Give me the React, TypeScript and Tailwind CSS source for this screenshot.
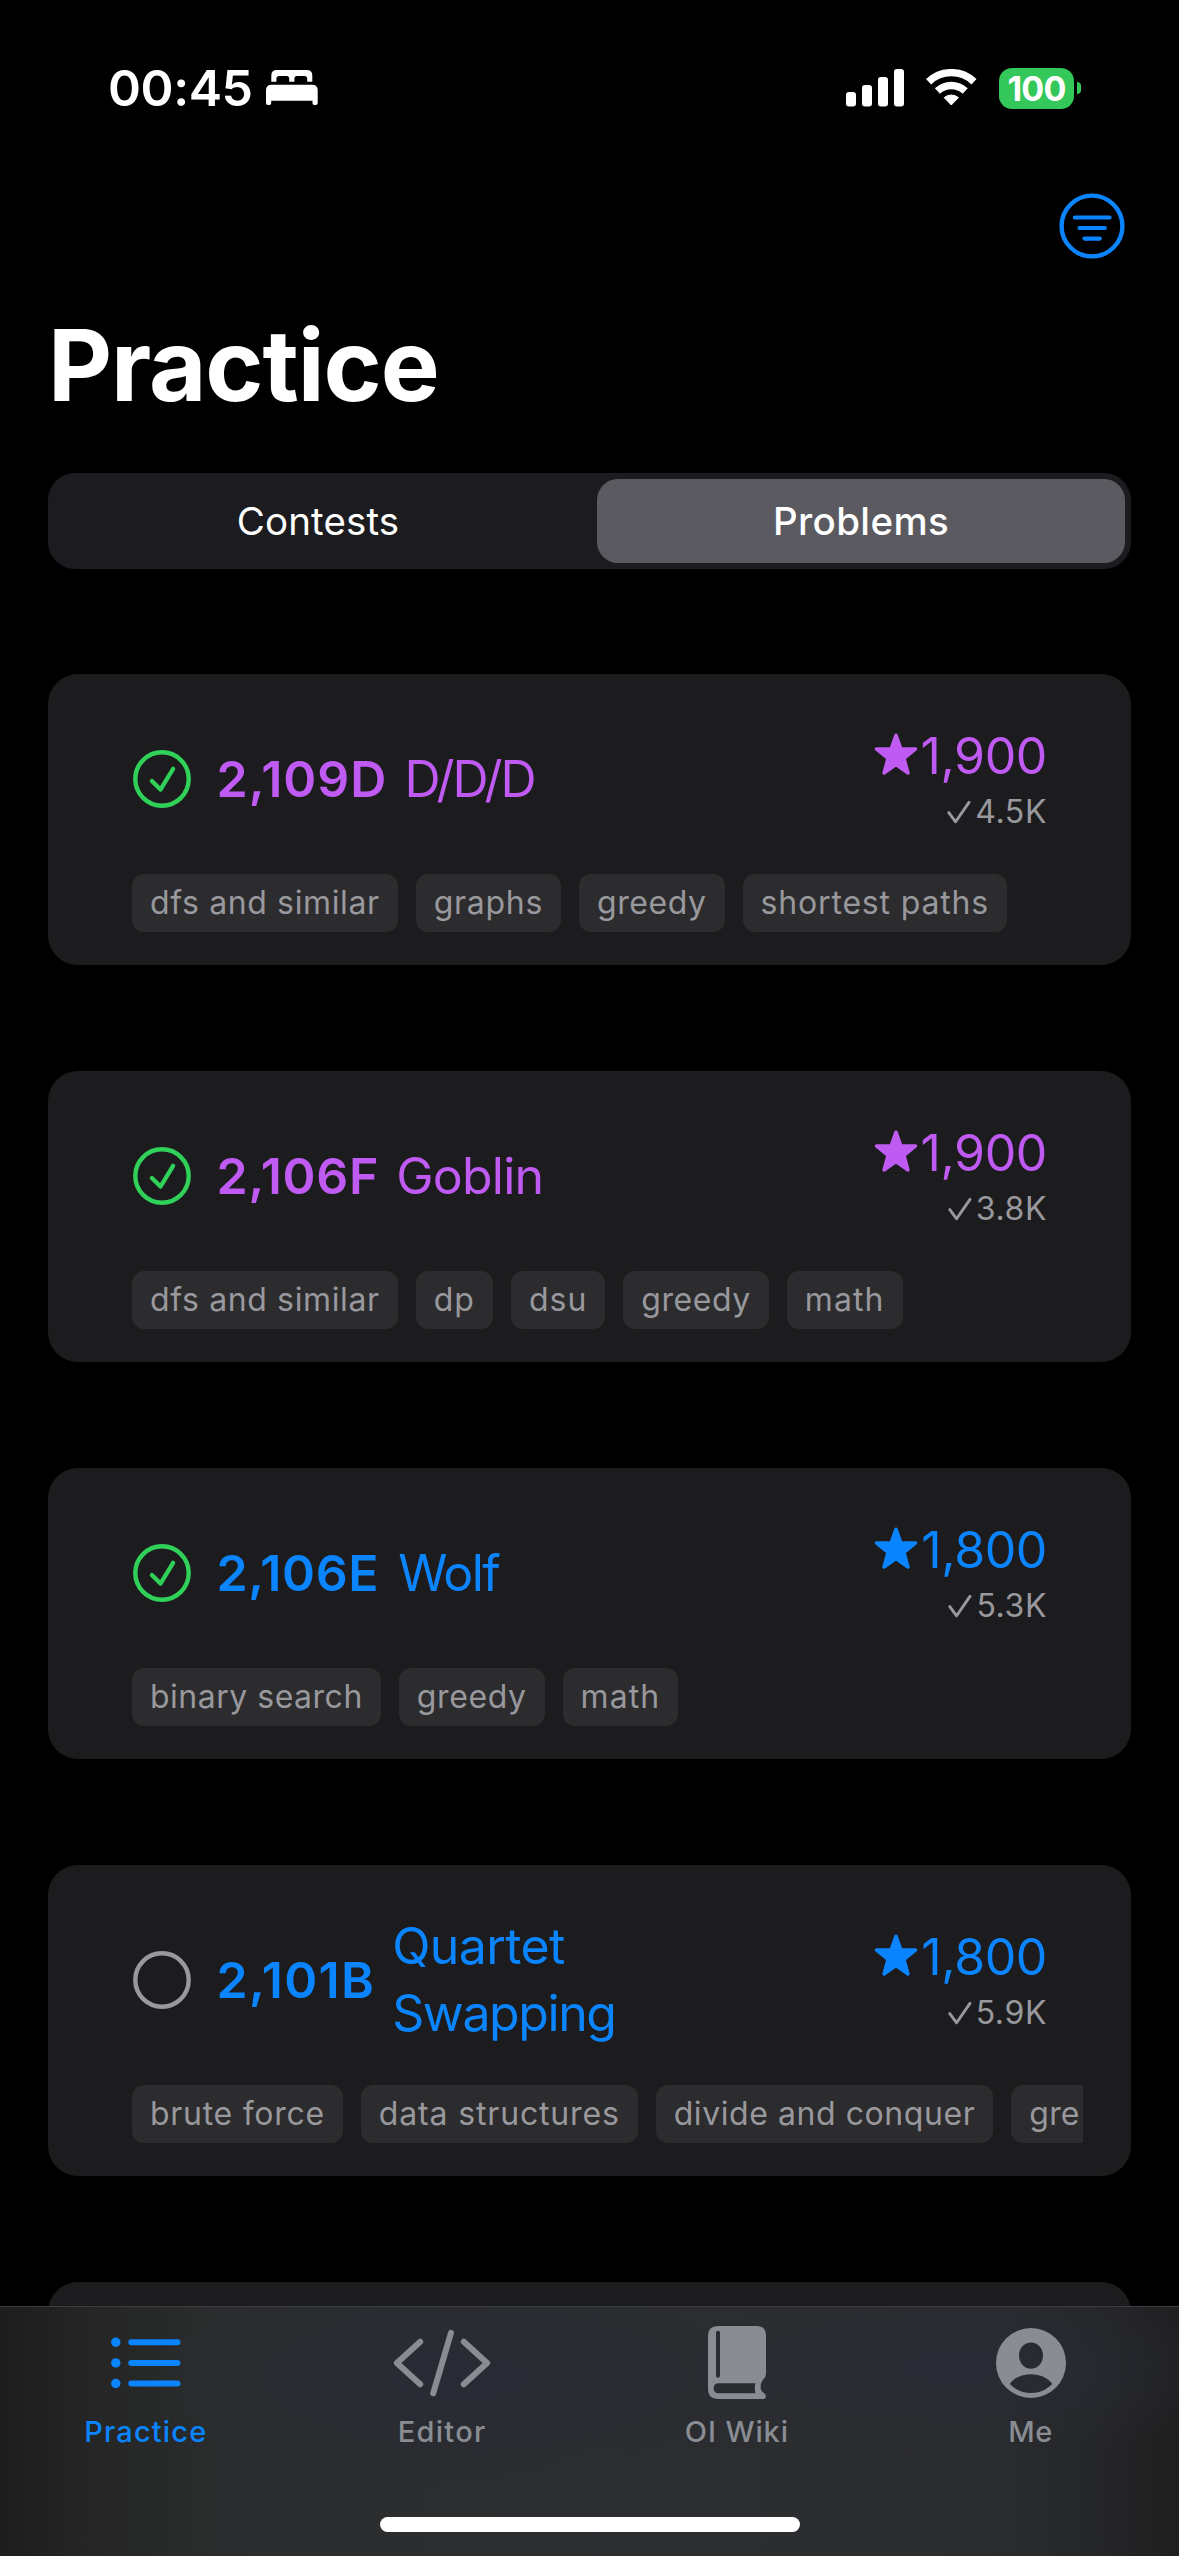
import type { ReactNode } from "react";

type Tag = { text: string; spacing: string };
type Problem = {
  id: string;
  idClass: string;
  title: ReactNode;
  titleClass: string;
  color: string;
  solved: boolean;
  rating: string;
  count: string;
  tags: Tag[];
};

const PURPLE = "text-[#bf5af2]";
const BLUE = "text-[#0a84ff]";

const problems: Problem[] = [
  {
    id: "2,109D",
    idClass: "tracking-[1px]",
    title: "D/D/D",
    titleClass: "tracking-[-2px]",
    color: PURPLE,
    solved: true,
    rating: "1,900",
    count: "4.5K",
    tags: [
      { text: "dfs and similar", spacing: "tracking-[0.63px]" },
      { text: "graphs", spacing: "tracking-[0.72px]" },
      { text: "greedy", spacing: "tracking-[0.55px]" },
      { text: "shortest paths", spacing: "tracking-[0.82px]" },
    ],
  },
  {
    id: "2,106F",
    idClass: "tracking-[0.75px]",
    title: "Goblin",
    titleClass: "tracking-[-0.75px]",
    color: PURPLE,
    solved: true,
    rating: "1,900",
    count: "3.8K",
    tags: [
      { text: "dfs and similar", spacing: "tracking-[0.63px]" },
      { text: "dp", spacing: "tracking-[1px]" },
      { text: "dsu", spacing: "tracking-[1px]" },
      { text: "greedy", spacing: "tracking-[0.55px]" },
      { text: "math", spacing: "tracking-[1.1px]" },
    ],
  },
  {
    id: "2,106E",
    idClass: "tracking-[0.6px]",
    title: "Wolf",
    titleClass: "ml-[2px] tracking-[-1.6px]",
    color: BLUE,
    solved: true,
    rating: "1,800",
    count: "5.3K",
    tags: [
      { text: "binary search", spacing: "tracking-[0.5px]" },
      { text: "greedy", spacing: "tracking-[0.6px]" },
      { text: "math", spacing: "tracking-[1.1px]" },
    ],
  },
  {
    id: "2,101B",
    idClass: "tracking-[1.3px]",
    title: (
      <>
        <span className="tracking-[-0.6px]">Quartet </span>
        <span className="tracking-[-1.4px]">Swapping</span>
      </>
    ),
    titleClass: "",
    color: BLUE,
    solved: false,
    rating: "1,800",
    count: "5.9K",
    tags: [
      { text: "brute force", spacing: "tracking-[0.72px]" },
      { text: "data structures", spacing: "tracking-[0.84px]" },
      { text: "divide and conquer", spacing: "tracking-[0.57px]" },
      { text: "gre", spacing: "tracking-[0.2px]" },
    ],
  },
];

function BedIcon() {
  return (
    <svg width="52" height="36" viewBox="0 0 52 36" fill="#fff">
      <path d="M5.3 11.7V5.5Q5.3 0 10.8 0H40.8Q46.3 0 46.3 5.5V11.7H41.2V8.8Q41.2 6 38.4 6H31Q28.4 6 28.4 8.6V11.7H23.2V8.6Q23.2 6 20.6 6H13.2Q10.4 6 10.4 8.8V11.7Z" />
      <path d="M0 20.2Q0 14.7 5.5 14.7H46.2Q51.7 14.7 51.7 20.2V33.2Q51.7 35 49.9 35H48.3Q46.5 35 46.5 33.2V30.7H5.2V33.2Q5.2 35 3.4 35H1.8Q0 35 0 33.2Z" />
    </svg>
  );
}

function SignalIcon() {
  return (
    <svg width="58" height="38" viewBox="0 0 58 38" fill="#fff">
      <rect x="0" y="23" width="10" height="14.5" rx="3" />
      <rect x="16" y="16" width="10" height="21.5" rx="3" />
      <rect x="32" y="8" width="10" height="29.5" rx="3" />
      <rect x="48" y="0" width="10" height="37.5" rx="3" />
    </svg>
  );
}

function WifiIcon() {
  return (
    <svg width="51" height="38" viewBox="0 0 51 38" fill="none" stroke="#fff">
      <path d="M2.6 12.7A33 33 0 0 1 48 12.7" strokeWidth="7.4" />
      <path d="M11.4 22A20.2 20.2 0 0 1 39.2 22" strokeWidth="7.4" />
      <path d="M18.2 28.6A11 11 0 0 1 32.4 28.6L25.3 36Z" fill="#fff" strokeWidth="1" strokeLinejoin="round" />
    </svg>
  );
}

function FilterIcon() {
  return (
    <svg width="66" height="66" viewBox="0 0 66 66" fill="none" stroke="#0a84ff" strokeLinecap="round">
      <circle cx="33" cy="33" r="30.4" strokeWidth="4.4" />
      <path d="M15.8 24.5H50.6M20.5 35H45.8M25.5 45.6H40.8" strokeWidth="4.2" />
    </svg>
  );
}

function StatusCircle({ solved }: { solved: boolean }) {
  return (
    <svg className="ml-px shrink-0" width="58" height="58" viewBox="0 0 58 58" fill="none" strokeLinecap="round" strokeLinejoin="round">
      <circle cx="29" cy="29" r="26.7" strokeWidth="4.4" stroke={solved ? "#30d158" : "#98989d"} />
      {solved && <path d="M18.9 31L27.5 39.6L40.1 18.8" strokeWidth="4.3" stroke="#30d158" />}
    </svg>
  );
}

function StarIcon() {
  return (
    <svg className="mb-[3px]" width="45" height="43" viewBox="0 0 45 43" fill="currentColor" stroke="currentColor" strokeWidth="3.4" strokeLinejoin="round">
      <path d="M23 2.2L28 16H42.6L31 25.4L35 40L23 31.5L11 40L15 25.4L3.4 16H18Z" />
    </svg>
  );
}

function CheckIcon() {
  return (
    <svg width="24" height="24" viewBox="0 0 24 24" fill="none" stroke="#98989d" strokeWidth="2.9" strokeLinecap="round" strokeLinejoin="round">
      <path d="M1.8 12.6L8.6 21.8L22 2.4" />
    </svg>
  );
}

function ListIcon() {
  return (
    <svg width="70" height="74" viewBox="0 0 70 74" fill="none" stroke="currentColor" strokeLinecap="round">
      <g fill="currentColor" stroke="none">
        <circle cx="4.8" cy="16.2" r="4.7" />
        <circle cx="4.8" cy="36.9" r="4.7" />
        <circle cx="4.8" cy="57.5" r="4.7" />
      </g>
      <path d="M20.3 16.2H66.5M20.3 36.9H66.5M20.3 57.5H66.5" strokeWidth="6" />
    </svg>
  );
}

function CodeIcon() {
  return (
    <svg width="98" height="74" viewBox="0 0 98 74" fill="none" stroke="currentColor" strokeWidth="6" strokeLinecap="round" strokeLinejoin="round">
      <path d="M27.2 15.7L3.9 37L27.2 58.3M58 6.8L40.2 67.3M70.8 15.7L94.1 37L70.8 58.3" />
    </svg>
  );
}

function BookIcon() {
  return (
    <svg width="58" height="74" viewBox="0 0 58 74" fill="currentColor" fillRule="evenodd">
      <path d="M10 0H48.5Q58 0 58 9.5V47.5Q58 50.8 55.6 53Q52.6 56 52.6 61.5Q52.6 65 56.4 67.4Q58 68.6 57.8 70.4Q57.4 73 54.6 73H10.5Q0 73 0 62.5V10Q0 0 10 0ZM10 4.8Q8 4.8 8 6.8V49.6Q8 51.8 10 51.8Q12 51.8 12 49.6V6.8Q12 4.8 10 4.8ZM10.8 57.2Q5.6 57.2 5.6 62.2Q5.6 67.2 10.8 67.2H47.4Q46.2 62.2 47.4 57.2Z" />
    </svg>
  );
}

function PersonIcon() {
  return (
    <svg width="70" height="74" viewBox="0 -2 70 74" fill="currentColor" fillRule="evenodd">
      <path d="M35 0A35 35 0 0 1 35 70A35 35 0 0 1 35 0ZM35 14.6C28.3 14.6 23 20.2 23 27.6C23 35 28.3 40.8 35 40.8C41.7 40.8 47 35 47 27.6C47 20.2 41.7 14.6 35 14.6ZM13.8 56C18 49.8 26 46.3 35 46.3C44 46.3 52 49.8 56.2 56C50.5 61.8 43.3 65 35 65C26.7 65 19.5 61.8 13.8 56Z" />
    </svg>
  );
}

function ProblemCard({ p }: { p: Problem }) {
  return (
    <article className="rounded-[30px] bg-[#1c1c1e] pt-[48px] pb-[33px] pl-[84px]">
      <div className={`flex min-h-[114px] items-center pr-[84px] text-[50px] leading-[67px] ${p.color}`}>
        <StatusCircle solved={p.solved} />
        <span className={`ml-[25.5px] font-semibold ${p.idClass}`}>{p.id}</span>
        <div className="ml-[17px] flex-1">
          <h2 className={`max-w-[300px] ${p.titleClass}`}>{p.title}</h2>
        </div>
        <div className="-mt-[2px] flex flex-col items-end">
          <div className="flex items-center gap-[3px]">
            <StarIcon />
            <span className="tracking-[-0.4px]">{p.rating}</span>
          </div>
          <div className="flex items-center gap-[4px] text-[32px] leading-[44px] tracking-[0.6px] text-[#98989d]">
            <CheckIcon />
            <span>{p.count}</span>
          </div>
        </div>
      </div>
      <div className="mt-[38px] mr-[48px] flex gap-[18px] overflow-hidden">
        {p.tags.map((t) => (
          <span
            key={t.text}
            className={`shrink-0 rounded-[12px] bg-[#2c2c2e] px-[18px] text-[32px] leading-[58px] whitespace-nowrap text-[#98989d] ${t.spacing}`}
          >
            {t.text}
          </span>
        ))}
      </div>
    </article>
  );
}

function TabItem({ icon, label, className }: { icon: ReactNode; label: string; className: string }) {
  return (
    <button className={`flex flex-col items-center ${className}`}>
      {icon}
      <span className="mt-[14px] text-[29px] leading-[36px] font-medium">{label}</span>
    </button>
  );
}

export default function App() {
  return (
    <div className="relative flex h-[2556px] w-[1179px] flex-col overflow-hidden bg-black font-['Inter',sans-serif] text-white">
      <header className="flex h-[176px] shrink-0 items-center justify-between pr-[98px] pl-[108px]">
        <div className="flex items-center gap-[13px]">
          <span className="text-[50px] leading-[60px] font-semibold tracking-[-0.4px]">00:45</span>
          <BedIcon />
        </div>
        <div className="flex items-center gap-[22px]">
          <SignalIcon />
          <WifiIcon />
          <div className="flex items-center gap-[3px]">
            <div className="h-[41px] w-[75px] rounded-[13px] bg-[#34c759] text-center text-[34px] leading-[41px] font-bold tracking-[-0.8px]">
              100
            </div>
            <div className="h-[12px] w-[4px] rounded-r-full bg-[#34c759]" />
          </div>
        </div>
      </header>

      <div className="flex h-[100px] shrink-0 items-center justify-end pr-[54px]">
        <FilterIcon />
      </div>
      <h1 className="h-[178px] shrink-0 pl-[48px] text-[99px] leading-[178px] font-bold tracking-[-1.07px]">Practice</h1>

      <div className="mx-[48px] mt-[19px] flex h-[96px] shrink-0 rounded-[27px] bg-[#1c1c20] p-[6px] text-center text-[38.5px] leading-[84px]">
        <button className="w-[543px] pr-[15px] tracking-[0.12px]">Contests</button>
        <button className="flex-1 rounded-[21px] bg-[#5b5a60] font-medium tracking-[0.37px]">Problems</button>
      </div>

      <main className="mx-[48px] mt-[105px] flex flex-col gap-[106px]">
        {problems.map((p) => (
          <ProblemCard key={p.id} p={p} />
        ))}
        <div className="h-[291px] rounded-[30px] bg-[#1c1c1e]" />
      </main>

      <nav className="absolute inset-x-0 bottom-0 h-[250px] border-t border-[#3a3e40] bg-[radial-gradient(ellipse_320px_110px_at_460px_70px,#282b35_0%,#282b3500_100%),radial-gradient(ellipse_300px_90px_at_960px_60px,#282b35_0%,#282b3500_100%),linear-gradient(to_right,#1d1d1e_0%,#242524_7%,#2a2c2d_18%,#2b2d30_50%,#2b2c2e_84%,#252628_93%,#1f1f20_100%)]">
        <div className="grid grid-cols-4 pt-[19px]">
          <TabItem icon={<ListIcon />} label="Practice" className="pr-[3px] tracking-[1.15px] text-[#0a84ff]" />
          <TabItem icon={<CodeIcon />} label="Editor" className="tracking-[1.3px] text-[#8a8c93]" />
          <TabItem icon={<BookIcon />} label="OI Wiki" className="tracking-[0.9px] text-[#8a8c93]" />
          <TabItem icon={<PersonIcon />} label="Me" className="pr-[2px] tracking-[0.6px] text-[#8a8c93]" />
        </div>
        <div className="mx-auto mt-[67px] h-[15px] w-[420px] rounded-full bg-white" />
      </nav>
    </div>
  );
}
